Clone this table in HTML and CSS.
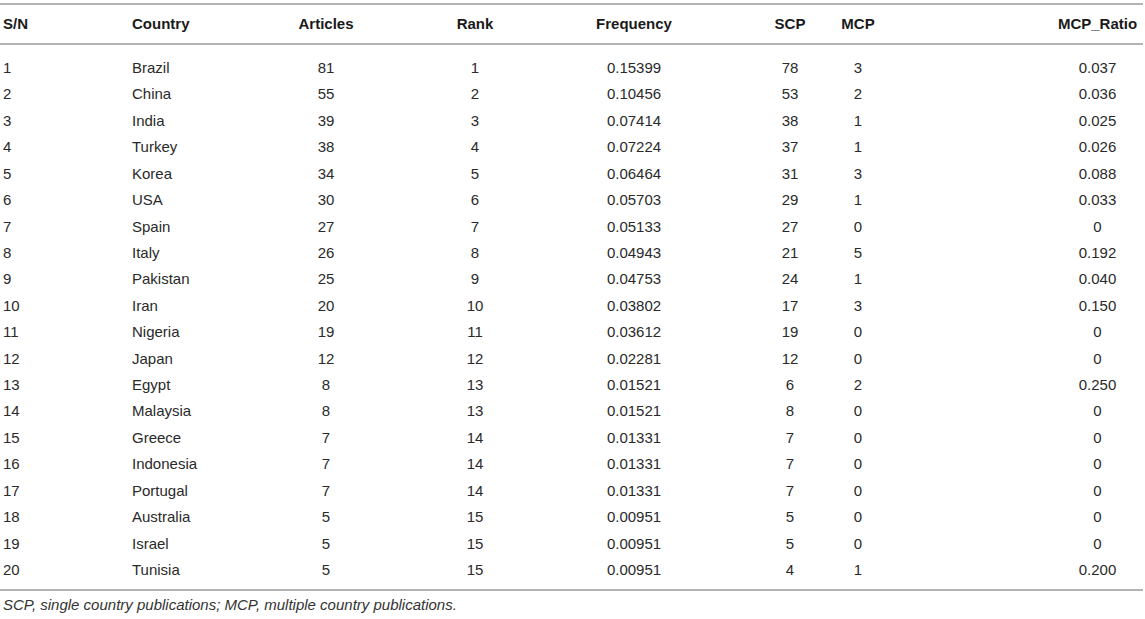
FILE: index.html
```html
<!DOCTYPE html>
<html>
<head>
<meta charset="utf-8">
<link rel="stylesheet" href="styles.css">
</head>
<body>
<div class="wrap">
<table class="data">
<colgroup>
<col class="c1"><col class="c2"><col class="c3"><col class="c4"><col class="c5"><col class="c6"><col class="c7"><col class="c8">
</colgroup>
<thead>
<tr><th class="l p1">S/N</th><th class="l p2">Country</th><th>Articles</th><th>Rank</th><th class="p5">Frequency</th><th class="p6">SCP</th><th>MCP</th><th class="p8">MCP_Ratio</th></tr>
</thead>
<tbody>
<tr><td class="l p1">1</td><td class="l p2">Brazil</td><td>81</td><td>1</td><td class="p5">0.15399</td><td class="p6">78</td><td>3</td><td class="p8">0.037</td></tr>
<tr><td class="l p1">2</td><td class="l p2">China</td><td>55</td><td>2</td><td class="p5">0.10456</td><td class="p6">53</td><td>2</td><td class="p8">0.036</td></tr>
<tr><td class="l p1">3</td><td class="l p2">India</td><td>39</td><td>3</td><td class="p5">0.07414</td><td class="p6">38</td><td>1</td><td class="p8">0.025</td></tr>
<tr><td class="l p1">4</td><td class="l p2">Turkey</td><td>38</td><td>4</td><td class="p5">0.07224</td><td class="p6">37</td><td>1</td><td class="p8">0.026</td></tr>
<tr><td class="l p1">5</td><td class="l p2">Korea</td><td>34</td><td>5</td><td class="p5">0.06464</td><td class="p6">31</td><td>3</td><td class="p8">0.088</td></tr>
<tr><td class="l p1">6</td><td class="l p2">USA</td><td>30</td><td>6</td><td class="p5">0.05703</td><td class="p6">29</td><td>1</td><td class="p8">0.033</td></tr>
<tr><td class="l p1">7</td><td class="l p2">Spain</td><td>27</td><td>7</td><td class="p5">0.05133</td><td class="p6">27</td><td>0</td><td class="p8">0</td></tr>
<tr><td class="l p1">8</td><td class="l p2">Italy</td><td>26</td><td>8</td><td class="p5">0.04943</td><td class="p6">21</td><td>5</td><td class="p8">0.192</td></tr>
<tr><td class="l p1">9</td><td class="l p2">Pakistan</td><td>25</td><td>9</td><td class="p5">0.04753</td><td class="p6">24</td><td>1</td><td class="p8">0.040</td></tr>
<tr><td class="l p1">10</td><td class="l p2">Iran</td><td>20</td><td>10</td><td class="p5">0.03802</td><td class="p6">17</td><td>3</td><td class="p8">0.150</td></tr>
<tr><td class="l p1">11</td><td class="l p2">Nigeria</td><td>19</td><td>11</td><td class="p5">0.03612</td><td class="p6">19</td><td>0</td><td class="p8">0</td></tr>
<tr><td class="l p1">12</td><td class="l p2">Japan</td><td>12</td><td>12</td><td class="p5">0.02281</td><td class="p6">12</td><td>0</td><td class="p8">0</td></tr>
<tr><td class="l p1">13</td><td class="l p2">Egypt</td><td>8</td><td>13</td><td class="p5">0.01521</td><td class="p6">6</td><td>2</td><td class="p8">0.250</td></tr>
<tr><td class="l p1">14</td><td class="l p2">Malaysia</td><td>8</td><td>13</td><td class="p5">0.01521</td><td class="p6">8</td><td>0</td><td class="p8">0</td></tr>
<tr><td class="l p1">15</td><td class="l p2">Greece</td><td>7</td><td>14</td><td class="p5">0.01331</td><td class="p6">7</td><td>0</td><td class="p8">0</td></tr>
<tr><td class="l p1">16</td><td class="l p2">Indonesia</td><td>7</td><td>14</td><td class="p5">0.01331</td><td class="p6">7</td><td>0</td><td class="p8">0</td></tr>
<tr><td class="l p1">17</td><td class="l p2">Portugal</td><td>7</td><td>14</td><td class="p5">0.01331</td><td class="p6">7</td><td>0</td><td class="p8">0</td></tr>
<tr><td class="l p1">18</td><td class="l p2">Australia</td><td>5</td><td>15</td><td class="p5">0.00951</td><td class="p6">5</td><td>0</td><td class="p8">0</td></tr>
<tr><td class="l p1">19</td><td class="l p2">Israel</td><td>5</td><td>15</td><td class="p5">0.00951</td><td class="p6">5</td><td>0</td><td class="p8">0</td></tr>
<tr><td class="l p1">20</td><td class="l p2">Tunisia</td><td>5</td><td>15</td><td class="p5">0.00951</td><td class="p6">4</td><td>1</td><td class="p8">0.200</td></tr>
</tbody>
</table>
<p class="note">SCP, single country publications; MCP, multiple country publications.</p>
</div>
</body>
</html>
```

FILE: styles.css
```css
html, body {
  margin: 0;
  padding: 0;
  background: #ffffff;
}
body {
  font-family: "Liberation Sans", Arial, Helvetica, sans-serif;
  color: #2a2a2a;
}
.wrap {
  padding-top: 3px;
  width: 1143px;
}
.data {
  width: 1143px;
  table-layout: fixed;
  border-collapse: collapse;
  font-size: 15px;
}
.c1 { width: 129px; }
.c2 { width: 131px; }
.c3 { width: 132px; }
.c4 { width: 166px; }
.c5 { width: 182px; }
.c6 { width: 80px; }
.c7 { width: 76px; }
.c8 { width: 247px; }
.data th, .data td {
  padding: 0;
  text-align: center;
  white-space: nowrap;
}
.data thead tr {
  border-top: 2px solid #b4b4b4;
  border-bottom: 2px solid #b4b4b4;
}
.data th {
  font-weight: bold;
  height: 38px;
  line-height: 38px;
  color: #1a1a1a;
}
.data td {
  height: 26.42px;
  line-height: 26.42px;
}
.data tbody tr:first-child td {
  padding-top: 10px;
}
.data tbody tr:last-child td {
  padding-bottom: 6px;
}
.data tbody tr:last-child {
  border-bottom: 2px solid #b4b4b4;
}
.data .l { text-align: left; }
.data .p1 { padding-left: 3px; }
.data .p2 { padding-left: 3px; }
.data .p5 { padding-right: 30px; }
.data .p6 { padding-left: 20px; }
.data .p8 { padding-left: 156px; }
.note {
  margin: 4px 0 0 3px;
  font-size: 15px;
  font-style: italic;
  color: #333333;
  line-height: 20px;
}
```
